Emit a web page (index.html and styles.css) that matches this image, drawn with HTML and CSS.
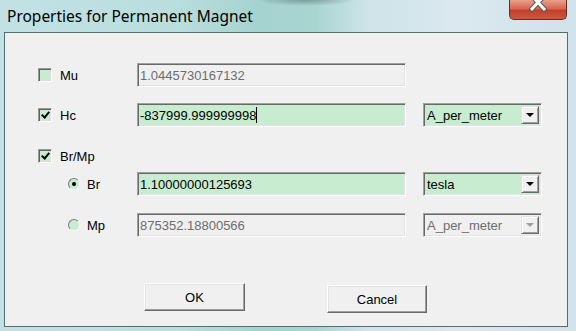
FILE: index.html
```html
<!DOCTYPE html>
<html>
<head>
	<title>Properties for Permanent Magnet</title>
	<link rel="stylesheet" href="styles.css">
</head>
<body>
	<div class="window">
		<div class="titlebar">
			<span class="title">Properties for Permanent Magnet</span>
			<span class="close">
				<svg width="58" height="20" viewBox="0 0 58 20">
					<path d="M23 -3 L35 10 M35 -3 L23 10" stroke="#5a5a5a" stroke-width="5" stroke-linecap="square"/>
					<path d="M23 -3 L35 10 M35 -3 L23 10" stroke="#ffffff" stroke-width="3" stroke-linecap="square"/>
				</svg>
			</span>
		</div>
		<div class="client">
			<div class="row">
				<label class="lbl"><span class="check"></span>Mu</label>
				<div class="field off">1.0445730167132</div>
			</div>
			<div class="row row-hc">
				<label class="lbl"><span class="check on"></span>Hc</label>
				<div class="field">-837999.999999998<span class="caret"></span></div>
				<div class="combo"><span>A_per_meter</span><span class="drop"></span></div>
			</div>
			<div class="row row-brmp">
				<label class="lbl"><span class="check on"></span>Br/Mp</label>
			</div>
			<div class="row row-br">
				<label class="lbl sub"><span class="radio on"></span>Br</label>
				<div class="field">1.10000000125693</div>
				<div class="combo"><span>tesla</span><span class="drop"></span></div>
			</div>
			<div class="row row-mp">
				<label class="lbl sub"><span class="radio"></span>Mp</label>
				<div class="field off">875352.18800566</div>
				<div class="combo off"><span>A_per_meter</span><span class="drop"></span></div>
			</div>
			<div class="buttons">
				<div class="btn">OK</div>
				<div class="btn cancel">Cancel</div>
			</div>
		</div>
	</div>
</body>
</html>
```

FILE: styles.css
```css
* {
	box-sizing: border-box;
}

body {
	margin: 0;
	font-family: "Liberation Sans", Arial, sans-serif;
	font-size: 13px;
	color: #000;
}

.window {
	width: 576px;
	height: 331px;
	display: flex;
	flex-direction: column;
	background:
		radial-gradient(ellipse 50px 6px at 305px 0, #7a9c9b, transparent),
		linear-gradient(90deg, #c2e1e5 0%, #b9dedd 30%, #a5d3cf 45%, #a9d5d1 55%, #cfe4ea 64%, #dbe8ef 80%, #d0e2ea 100%);
}

.titlebar {
	height: 32px;
	display: flex;
	align-items: center;
	padding-left: 7px;
}

.title {
	font-family: "Noto Sans", sans-serif;
	font-size: 15.5px;
	color: #000;
	margin-bottom: 1px;
}

.close {
	margin-left: auto;
	margin-right: 9px;
	align-self: flex-start;
	width: 58px;
	height: 20px;
	border: 1px solid #6b2c22;
	border-top: none;
	border-radius: 0 0 5px 5px;
	background: linear-gradient(#e8a08c 0%, #d9664f 45%, #c3402c 55%, #cc5840 100%);
	overflow: hidden;
}

.close svg {
	display: block;
	margin: -1px 0 0 -1px;
}

.client {
	flex: 1;
	margin: 0 8px 4px 4px;
	background: #f0f0f0;
	border: 1px solid #566e6c;
	display: flex;
	flex-direction: column;
	padding-top: 30px;
}

.row {
	height: 24px;
	display: flex;
	align-items: center;
}

.row-hc {margin-top: 16px;}
.row-brmp {margin-top: 17px;}
.row-br {margin-top: 4px;}
.row-mp {margin-top: 17px;}

.lbl {
	width: 132px;
	flex: none;
	display: flex;
	align-items: center;
	padding-left: 33px;
	gap: 8px;
}

.lbl.sub {
	padding-left: 63px;
	gap: 7px;
}

.check {
	width: 14px;
	height: 14px;
	background: #c8ecd0;
	border: 1px solid;
	border-color: #9a9a9a #ffffff #ffffff #9a9a9a;
	box-shadow: inset 1px 1px 0 #606060, inset -1px -1px 0 #dcdcdc;
	position: relative;
}

.check.on::after {
	content: "";
	position: absolute;
	left: 3px;
	top: 1px;
	width: 3px;
	height: 6px;
	border: solid #000;
	border-width: 0 2px 2px 0;
	transform: translate(1px, 0) rotate(40deg);
}

.radio {
	width: 12px;
	height: 12px;
	border-radius: 50%;
	background: #c8ecd0;
	border: 1px solid;
	border-color: #7a7a7a #f4f4f4 #f4f4f4 #7a7a7a;
	display: flex;
	align-items: center;
	justify-content: center;
}

.radio.on::after {
	content: "";
	width: 4px;
	height: 4px;
	border-radius: 50%;
	background: #000;
}

.field {
	width: 269px;
	height: 24px;
	flex: none;
	background: #c8ecd0;
	border: 1px solid;
	border-color: #a0a0a0 #fff #fff #a0a0a0;
	box-shadow: inset 1px 1px 0 #696969, inset -1px -1px 0 #e3e3e3;
	padding: 0 2px;
	display: flex;
	align-items: center;
	white-space: nowrap;
}

.field.off {
	background: #f0f0f0;
	color: #6d6d6d;
}

.caret {
	width: 1px;
	height: 16px;
	background: #000;
}

.combo {
	width: 119px;
	height: 24px;
	margin-left: 17px;
	background: #c8ecd0;
	border: 1px solid;
	border-color: #a0a0a0 #fff #fff #a0a0a0;
	box-shadow: inset 1px 1px 0 #696969, inset -1px -1px 0 #e3e3e3;
	padding: 2px 2px 2px 3px;
	display: flex;
	align-items: center;
	justify-content: space-between;
}

.drop {
	width: 18px;
	height: 18px;
	background: #f0f0f0;
	border: 1px solid;
	border-color: #e3e3e3 #696969 #696969 #e3e3e3;
	box-shadow: inset 1px 1px 0 #fff, inset -1px -1px 0 #a0a0a0;
	position: relative;
}

.drop::after {
	content: "";
	position: absolute;
	left: 4px;
	top: 6px;
	border: 4px solid transparent;
	border-top: 4px solid #000;
	border-bottom: none;
}

.combo.off {
	background: #f0f0f0;
	color: #6d6d6d;
}

.combo.off .drop::after {
	border-top-color: #a0a0a0;
}

.buttons {
	display: flex;
	align-items: flex-start;
	margin-top: 46px;
	padding-left: 139px;
	gap: 82px;
}

.btn {
	width: 101px;
	height: 28px;
	background: #f0f0f0;
	border: 1px solid;
	border-color: #fff #696969 #696969 #fff;
	box-shadow: inset -1px -1px 0 #a0a0a0, inset 1px 1px 0 #e3e3e3;
	display: flex;
	align-items: center;
	justify-content: center;
}

.btn.cancel {
	width: 100px;
	margin-top: 2px;
}
```
